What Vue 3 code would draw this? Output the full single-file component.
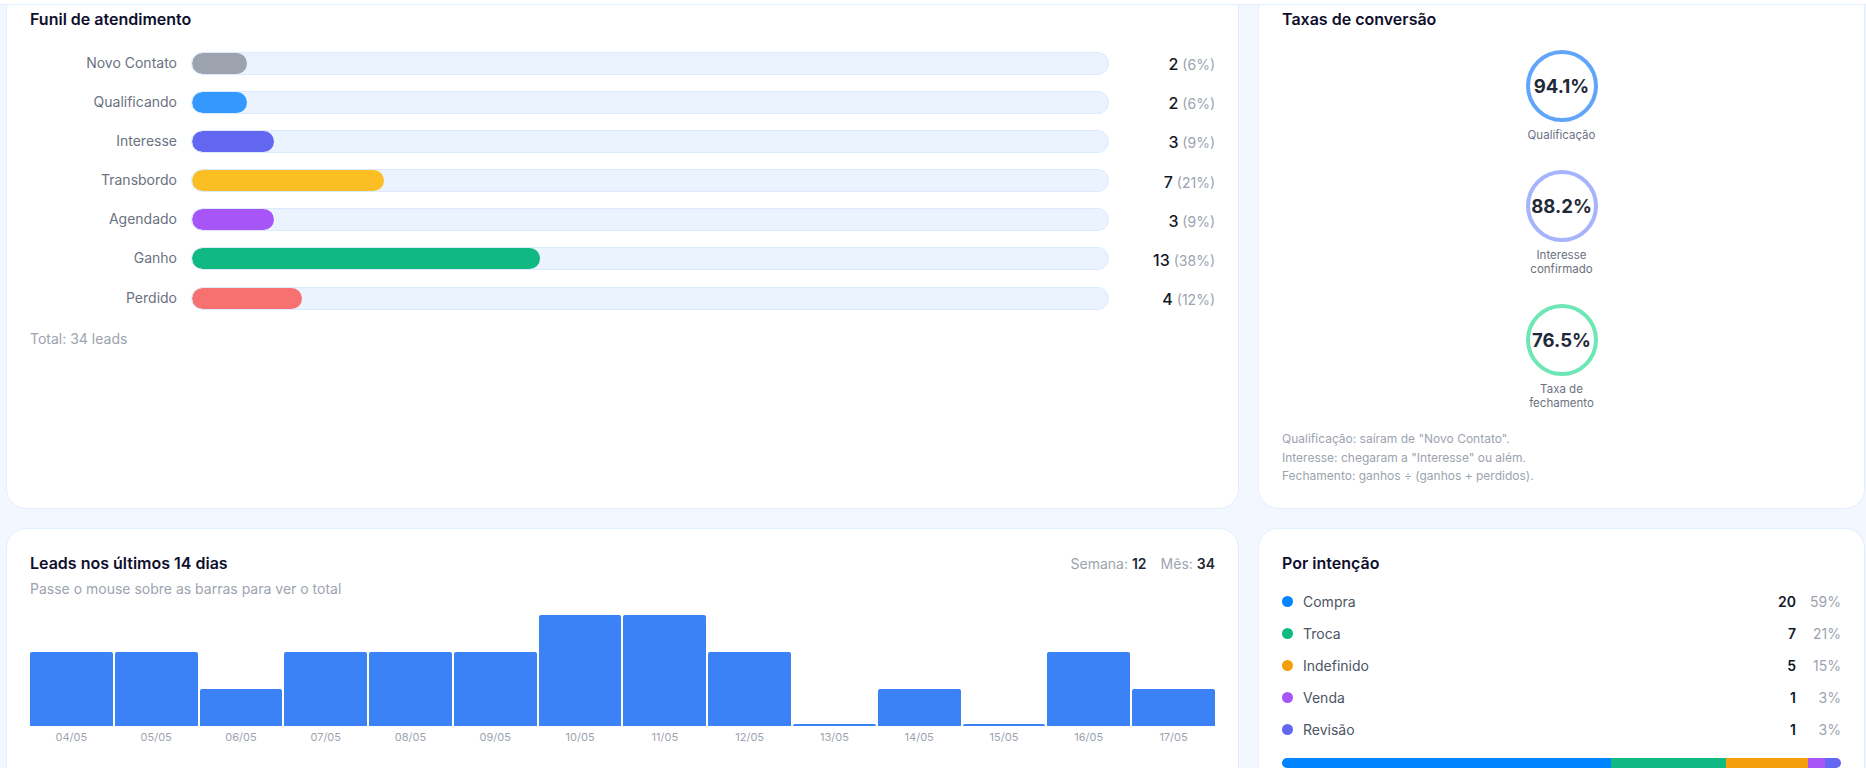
<script setup>
const funnel = [
  { label: 'Novo Contato', n: 2, pct: 6, color: '#9ca3af' },
  { label: 'Qualificando', n: 2, pct: 6, color: '#3399ff' },
  { label: 'Interesse', n: 3, pct: 9, color: '#6366f1' },
  { label: 'Transbordo', n: 7, pct: 21, color: '#fbbf24' },
  { label: 'Agendado', n: 3, pct: 9, color: '#a855f7' },
  { label: 'Ganho', n: 13, pct: 38, color: '#10b981' },
  { label: 'Perdido', n: 4, pct: 12, color: '#f87171' },
]
const rates = [
  { value: '94.1%', label: 'Qualificação', color: '#60a5fa' },
  { value: '88.2%', label: 'Interesse confirmado', color: '#a5b4fc' },
  { value: '76.5%', label: 'Taxa de fechamento', color: '#6ee7b7' },
]
const days = [
  ['04/05', 2], ['05/05', 2], ['06/05', 1], ['07/05', 2], ['08/05', 2], ['09/05', 2], ['10/05', 3],
  ['11/05', 3], ['12/05', 2], ['13/05', 0], ['14/05', 1], ['15/05', 0], ['16/05', 2], ['17/05', 1],
]
const intents = [
  { label: 'Compra', n: 20, pct: 59, color: '#0084ff' },
  { label: 'Troca', n: 7, pct: 21, color: '#10b981' },
  { label: 'Indefinido', n: 5, pct: 15, color: '#f59e0b' },
  { label: 'Venda', n: 1, pct: 3, color: '#a855f7' },
  { label: 'Revisão', n: 1, pct: 3, color: '#6366f1' },
]
</script>

<template>
  <div class="page">
    <div class="topbar"></div>
    <main class="grid">
      <section class="card funnel-card">
        <h2 class="title">Funil de atendimento</h2>
        <div class="funnel">
          <div v-for="row in funnel" :key="row.label" class="funnel-row">
            <span class="funnel-label">{{ row.label }}</span>
            <div class="track">
              <div class="fill" :style="{ width: row.pct + '%', background: row.color }"></div>
            </div>
            <span class="funnel-value"><b>{{ row.n }}</b> <small>({{ row.pct }}%)</small></span>
          </div>
        </div>
        <p class="total">Total: 34 leads</p>
      </section>

      <section class="card rates-card">
        <h2 class="title">Taxas de conversão</h2>
        <div class="rates">
          <div v-for="r in rates" :key="r.label" class="rate">
            <div class="ring" :style="{ borderColor: r.color }">{{ r.value }}</div>
            <span class="rate-label">{{ r.label }}</span>
          </div>
        </div>
        <div class="notes">
          <div>Qualificação: saíram de "Novo Contato".</div>
          <div>Interesse: chegaram a "Interesse" ou além.</div>
          <div>Fechamento: ganhos ÷ (ganhos + perdidos).</div>
        </div>
      </section>

      <section class="card lower">
        <div class="head">
          <h2 class="title">Leads nos últimos 14 dias</h2>
          <div class="summary">Semana: <b>12</b><span class="sep">Mês: <b>34</b></span></div>
        </div>
        <p class="sub">Passe o mouse sobre as barras para ver o total</p>
        <div class="chart">
          <div v-for="d in days" :key="d[0]" class="col">
            <div class="plot">
              <div class="bar" :style="{ height: d[1] ? d[1] * 37 + 'px' : '2px' }"></div>
            </div>
            <span class="day">{{ d[0] }}</span>
          </div>
        </div>
      </section>

      <section class="card lower">
        <h2 class="title">Por intenção</h2>
        <div class="intents">
          <div v-for="i in intents" :key="i.label" class="intent">
            <span class="dot" :style="{ background: i.color }"></span>
            <span class="intent-label">{{ i.label }}</span>
            <b class="intent-n">{{ i.n }}</b>
            <span class="intent-pct">{{ i.pct }}%</span>
          </div>
        </div>
        <div class="stack">
          <div v-for="i in intents" :key="i.label" :style="{ flexGrow: i.n, background: i.color }"></div>
        </div>
      </section>
    </main>
  </div>
</template>

<style>
html, body { margin: 0; overflow: hidden; }
</style>

<style scoped>
.page {
  height: 768px;
  overflow: hidden;
  background: #f3f7ff;
  font-family: Inter, "Noto Sans", sans-serif;
  color: #111827;
}
.topbar {
  height: 4px;
  background: #fff;
  border-bottom: 1px solid #e3efff;
}
.grid {
  display: grid;
  grid-template-columns: 1233px 607px;
  grid-template-rows: 504px auto;
  column-gap: 19px;
  row-gap: 19px;
  padding-left: 6px;
}
.card {
  background: #fff;
  border: 1px solid #e3efff;
  border-radius: 20px;
  box-sizing: border-box;
  padding: 4px 23px 24px;
}
.funnel-card, .rates-card {
  border-top: 0;
  border-top-left-radius: 0;
  border-top-right-radius: 0;
}
.lower { padding-top: 24px; height: 300px; }
.title {
  margin: 0;
  font-size: 16px;
  font-weight: 600;
  line-height: 20px;
  color: #0f0f2d;
}
.funnel {
  display: flex;
  flex-direction: column;
  gap: 16.17px;
  margin-top: 22.6px;
}
.funnel-row {
  display: flex;
  align-items: center;
}
.funnel-label {
  width: 147px;
  flex: none;
  margin-right: 14px;
  padding-bottom: 2px;
  text-align: right;
  font-size: 14px;
  color: #6b7280;
}
.track {
  width: 918px;
  flex: none;
  height: 23px;
  box-sizing: border-box;
  border: 1px solid #dbeafe;
  border-radius: 12px;
  background: #ebf3ff;
  overflow: hidden;
}
.fill { height: 100%; border-radius: 11px; }
.funnel-value {
  flex: 1;
  text-align: right;
  font-size: 14px;
  color: #9ca3af;
  white-space: nowrap;
  padding-top: 2px;
}
.funnel-value b { font-size: 16px; font-weight: 500; color: #111827; }
.funnel-value small { font-size: 14px; }
.total {
  margin: 19px 0 0;
  font-size: 14px;
  line-height: 20px;
  color: #9ca3af;
}
.rates {
  display: flex;
  flex-direction: column;
  align-items: center;
  gap: 28px;
  margin-top: 21px;
}
.rate {
  width: 96px;
  display: flex;
  flex-direction: column;
  align-items: center;
  gap: 6px;
}
.ring {
  width: 72px;
  height: 72px;
  box-sizing: border-box;
  border: 4px solid;
  border-radius: 50%;
  display: flex;
  align-items: center;
  justify-content: center;
  font-size: 18.6px;
  font-weight: 700;
  color: #1f2937;
}
.rate-label {
  font-size: 11.5px;
  line-height: 14px;
  color: #6b7280;
  text-align: center;
}
.notes {
  margin-top: 20px;
  font-size: 12px;
  line-height: 18.7px;
  color: #9ca3af;
}
.head {
  display: flex;
  justify-content: space-between;
  align-items: center;
}
.summary { font-size: 14px; color: #9ca3af; }
.summary b { font-weight: 600; color: #1f2937; }
.sep { margin-left: 14px; }
.sub {
  margin: 6px 0 0;
  font-size: 14px;
  line-height: 20px;
  color: #9ca3af;
}
.chart {
  display: flex;
  gap: 2px;
  margin-top: 16px;
}
.col {
  flex: 1 1 0;
  min-width: 0;
  display: flex;
  flex-direction: column;
  align-items: stretch;
}
.plot {
  height: 111px;
  display: flex;
  align-items: flex-end;
}
.bar {
  width: 100%;
  background: #3b82f6;
  border-radius: 2px 2px 0 0;
}
.day {
  margin-top: 4px;
  text-align: center;
  font-size: 11px;
  line-height: 14px;
  color: #9ca3af;
}
.intents {
  display: flex;
  flex-direction: column;
  gap: 14px;
  margin-top: 19px;
}
.intent {
  display: flex;
  align-items: center;
  height: 18px;
  font-size: 14px;
}
.dot {
  width: 11px;
  height: 11px;
  border-radius: 50%;
  margin-right: 10px;
  flex: none;
}
.intent-label { flex: 1; color: #4b5563; }
.intent-n { font-size: 14px; font-weight: 600; color: #111827; }
.intent-pct {
  width: 45px;
  text-align: right;
  font-size: 14px;
  color: #9ca3af;
}
.stack {
  display: flex;
  height: 10px;
  margin-top: 20px;
  border-radius: 5px;
  overflow: hidden;
}
.stack div { flex-basis: 0; }
</style>
